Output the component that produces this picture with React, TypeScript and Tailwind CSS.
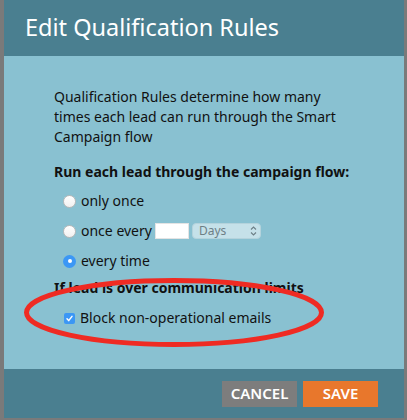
function Radio({ checked }: { checked?: boolean }) {
  if (checked) {
    return (
      <span className="flex h-[13px] w-[13px] shrink-0 items-center justify-center rounded-full bg-[#3b97f5]">
        <span className="h-[4px] w-[4px] rounded-full bg-white" />
      </span>
    );
  }
  return (
    <span className="h-[13px] w-[13px] shrink-0 rounded-full border border-[#b9b9b9] bg-gradient-to-b from-white to-[#f0f0f0]" />
  );
}

function Checkbox() {
  return (
    <span className="flex h-[11px] w-[11px] shrink-0 items-center justify-center rounded-[2px] bg-[#3b97f5]">
      <svg width="9" height="9" viewBox="0 0 9 9" fill="none">
        <path
          d="M2 4.8 L3.7 6.6 L7 2.4"
          stroke="white"
          strokeWidth="1.5"
          strokeLinecap="round"
          strokeLinejoin="round"
        />
      </svg>
    </span>
  );
}

export default function App() {
  return (
    <div className="relative flex h-[420px] w-[407px] flex-col bg-[#7a7a7a] pr-[3px] pb-[2px] pl-[4px] font-['Noto_Sans',sans-serif] text-[#111111]">
      <div className="flex h-[56px] shrink-0 items-center bg-[#4a7f90] pl-[21px]">
        <h1 className="text-[23.5px] leading-none text-white">
          Edit Qualification Rules
        </h1>
      </div>

      <div className="flex-1 bg-[#89c1d1] pt-[31px] pl-[50px] text-[14px] leading-[20px]">
        <p className="w-[300px]">
          Qualification Rules determine how many times each lead can run
          through the Smart Campaign flow
        </p>

        <div className="mt-[15px] font-bold">
          Run each lead through the campaign flow:
        </div>

        <div className="mt-[9px] flex flex-col gap-[10px] pl-[9px]">
          <label className="flex h-[20px] items-center gap-[5px]">
            <Radio />
            <span>only once</span>
          </label>
          <label className="flex h-[20px] items-center gap-[5px]">
            <Radio />
            <span>once every</span>
            <span className="ml-[-2px] h-[16px] w-[34px] border border-[#e4e4e4] bg-white" />
            <span className="ml-[-2px] flex h-[16px] w-[69px] items-center justify-between rounded-[4px] border border-[#b4d3dc] bg-[#c5e1e9] pr-[3px] pl-[6px] text-[12px] leading-none text-[#6d7f86]">
              Days
              <svg width="7" height="10" viewBox="0 0 7 10" fill="none">
                <path
                  d="M1 3.5 L3.5 1 L6 3.5 M1 6.5 L3.5 9 L6 6.5"
                  stroke="#6d7f86"
                  strokeWidth="1.1"
                />
              </svg>
            </span>
          </label>
          <label className="flex h-[20px] items-center gap-[5px]">
            <Radio checked />
            <span>every time</span>
          </label>
        </div>

        <div className="mt-[7px] font-bold">
          If lead is over communication limits
        </div>

        <label className="mt-[10px] flex h-[20px] items-center gap-[5px] pl-[10px]">
          <Checkbox />
          <span>Block non-operational emails</span>
        </label>
      </div>

      <div className="flex h-[49px] shrink-0 items-center justify-end gap-[6px] bg-[#4a7f90] pr-[26px]">
        <button className="h-[26px] w-[75px] bg-[#7d7d7d] text-[15px] font-semibold text-white">
          CANCEL
        </button>
        <button className="h-[26px] w-[75px] bg-[#e8772c] text-[15px] font-semibold text-white">
          SAVE
        </button>
      </div>

      <svg
        className="pointer-events-none absolute top-[273px] left-[19px]"
        width="310"
        height="80"
        viewBox="0 0 310 80"
        fill="none"
      >
        <ellipse
          cx="155"
          cy="39.5"
          rx="147.5"
          ry="32"
          stroke="#ef2b23"
          strokeWidth="5"
        />
      </svg>
    </div>
  );
}
